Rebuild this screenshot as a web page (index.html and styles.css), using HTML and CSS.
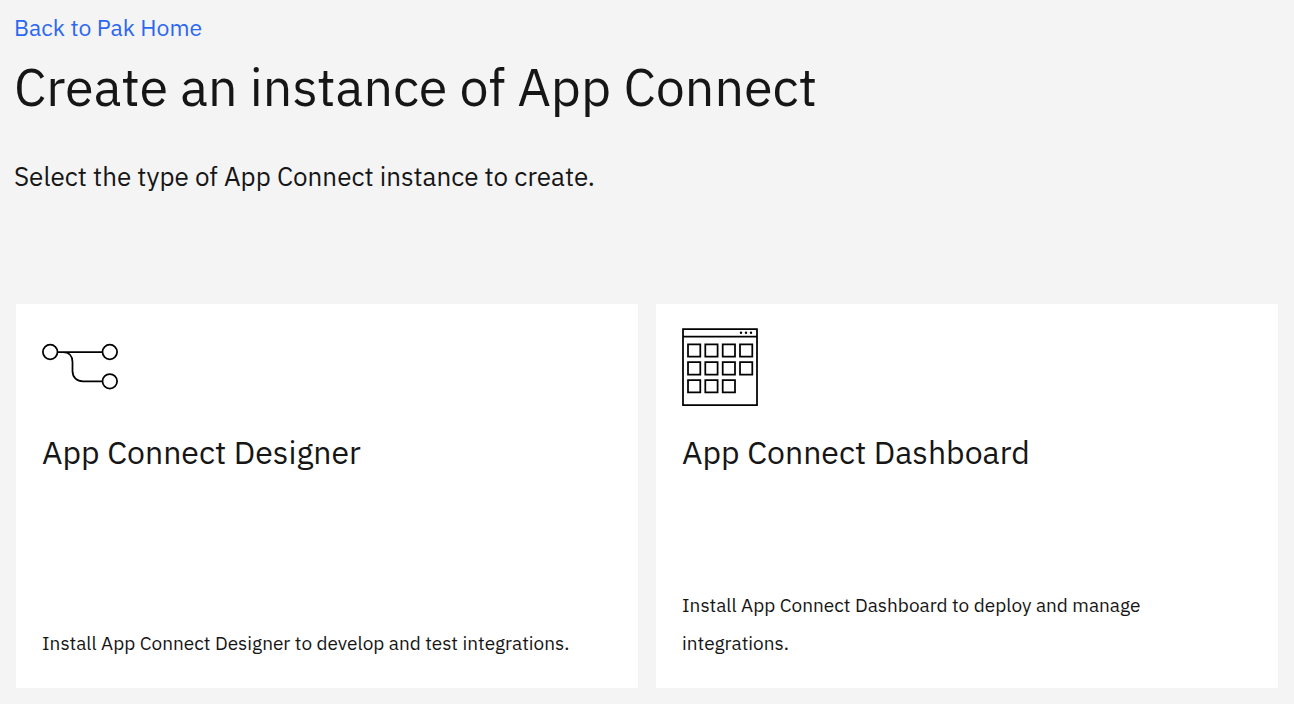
FILE: index.html
```html
<!DOCTYPE html>
<html lang="en">
<head>
<meta charset="utf-8">
<title>Create an instance of App Connect</title>
<link rel="stylesheet" href="styles.css">
</head>
<body>
<main class="page">
  <a class="back" href="#home">Back to Pak Home</a>
  <h1 class="title">Create an instance of App Connect</h1>
  <p class="lead">Select the type of App Connect instance to create.</p>
  <div class="cards">
    <a class="card" href="#designer">
      <svg class="icon" viewBox="0 0 76 78" aria-hidden="true">
        <circle cx="8.200" cy="24" r="7.300"/><circle cx="67.800" cy="24" r="7.300"/><circle cx="67.800" cy="53.300" r="7.300"/>
        <path d="M15.500 24H60.500M21 24C27 24 30.500 28 30.500 34V43C30.500 49.500 35 53.300 41 53.300H60.500"/>
      </svg>
      <h2 class="name">App Connect Designer</h2>
      <p class="text">Install App Connect Designer to develop and test integrations.</p>
    </a>
    <a class="card" href="#dashboard">
      <svg class="icon" viewBox="0 0 76 78" aria-hidden="true">
        <path d="M1 1H75V77H1ZM1 8.500H75"/>
        <path d="M6 16.300h12.300v12.300h-12.300zM23.300 16.300h12.300v12.300h-12.300zM40.700 16.300h12.300v12.300h-12.300zM58 16.300h12.300v12.300h-12.300zM6 34.200h12.300v12.300h-12.300zM23.300 34.200h12.300v12.300h-12.300zM40.700 34.200h12.300v12.300h-12.300zM58 34.200h12.300v12.300h-12.300zM6 52h12.300v12.300h-12.300zM23.300 52h12.300v12.300h-12.300zM40.700 52h12.300v12.300h-12.300z"/>
        <g class="dots"><circle cx="59" cy="4.800" r="1.200"/><circle cx="64" cy="4.800" r="1.200"/><circle cx="69" cy="4.800" r="1.200"/></g>
      </svg>
      <h2 class="name">App Connect Dashboard</h2>
      <p class="text">Install App Connect Dashboard to deploy and manage integrations.</p>
    </a>
  </div>
</main>
</body>
</html>
```
FILE: styles.css
```css
* { box-sizing: border-box; }
body {
  margin: 0;
  background: #f4f4f4;
  color: #161616;
  font-family: "IBM Plex Sans", "Noto Sans", sans-serif;
}
.page { padding: 11px 16px 16px 14px; }
.back {
  display: block;
  width: fit-content;
  color: #2c67f2;
  font-size: 23px;
  line-height: 32px;
  text-decoration: none;
}
.title {
  margin: 12px 0 0;
  font-size: 52px;
  font-weight: 400;
  line-height: 64px;
}
.lead {
  margin: 39px 0 0;
  font-size: 26px;
  line-height: 36px;
}
.cards {
  display: grid;
  grid-template-columns: 1fr 1fr;
  gap: 18px;
  margin: 110px 0 0 2px;
}
.card {
  display: flex;
  flex-direction: column;
  min-height: 384px;
  padding: 24px 26px 26px;
  background: #fff;
  color: inherit;
  text-decoration: none;
}
.icon {
  width: 76px;
  height: 78px;
  fill: none;
  stroke: #000;
  stroke-width: 1.75;
}
.dots { fill: #000; stroke: none; }
.name {
  margin: 25px 0 0;
  font-size: 32px;
  font-weight: 400;
  line-height: 42px;
}
.text {
  max-width: 540px;
  margin: auto 0 0;
  font-size: 19px;
  line-height: 38px;
}
```
